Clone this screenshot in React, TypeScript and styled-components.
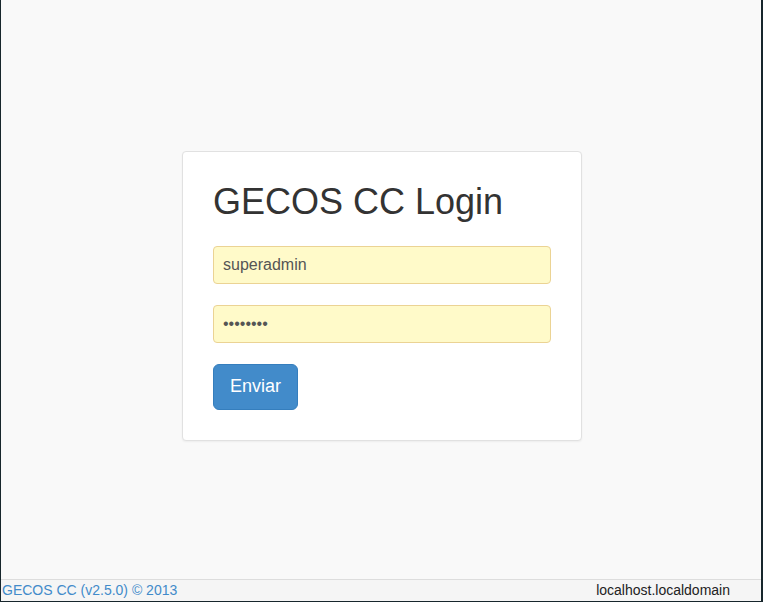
import React from "react";
import styled, { createGlobalStyle } from "styled-components";

const Global = createGlobalStyle`
  html, body { margin: 0; padding: 0; }
  body {
    background: #17262c;
    font-family: "Liberation Sans", Arial, sans-serif;
    font-size: 14px;
    line-height: 1.428571;
    color: #333;
  }
  * { box-sizing: border-box; }
`;

const Frame = styled.div`
  width: 763px;
  height: 602px;
  display: flex;
  flex-direction: column;
  border-left: 1px solid #17262c;
  border-right: 2px solid #17262c;
  border-bottom: 1px solid #17262c;
  background: #f9f9f9;
`;

const Main = styled.main`
  flex: 1;
  padding: 151px 0 0 2px;
  background: #f9f9f9;
`;

const Card = styled.div`
  width: 400px;
  margin: 0 auto;
  background: #fff;
  border: 1px solid #e1e1e1;
  border-radius: 4px;
  box-shadow: 0 1px 2px rgba(0, 0, 0, 0.05);
  padding: 30px 30px 30px;
`;

const Title = styled.h1`
  margin: 0 0 24px;
  font-size: 36px;
  font-weight: 500;
  line-height: 1.1;
  color: #333;
`;

const Form = styled.form`
  display: flex;
  flex-direction: column;
  gap: 21px;
  align-items: flex-start;
`;

const Field = styled.input`
  width: 100%;
  height: 38px;
  padding: 8px 9px;
  font-family: "Liberation Sans", Arial, sans-serif;
  font-size: 16px;
  color: #555;
  background: #fffac9;
  border: 1px solid #ebd394;
  border-radius: 4px;
  outline: none;
`;

const Button = styled.button`
  height: 46px;
  padding: 10px 16px;
  font-family: "Liberation Sans", Arial, sans-serif;
  font-size: 18px;
  line-height: 1.33;
  color: #fff;
  background: #428bca;
  border: 1px solid #357ebd;
  border-radius: 6px;
  cursor: pointer;
`;

const Footer = styled.footer`
  height: 22px;
  display: flex;
  justify-content: space-between;
  align-items: center;
  padding: 0 31px 0 1px;
  background: #f5f5f5;
  border-top: 1px solid #dddddd;
  font-size: 14px;
`;

const FooterLink = styled.a`
  color: #428bca;
  text-decoration: none;
`;

const Host = styled.span`
  color: #222;
`;

export default function App() {
  return (
    <>
      <Global />
      <Frame>
        <Main>
          <Card>
            <Title>GECOS CC Login</Title>
            <Form onSubmit={(e) => e.preventDefault()}>
              <Field type="text" value="superadmin" readOnly />
              <Field type="password" value="superadm" readOnly />
              <Button type="submit">Enviar</Button>
            </Form>
          </Card>
        </Main>
        <Footer>
          <FooterLink href="#">GECOS CC (v2.5.0) © 2013</FooterLink>
          <Host>localhost.localdomain</Host>
        </Footer>
      </Frame>
    </>
  );
}
